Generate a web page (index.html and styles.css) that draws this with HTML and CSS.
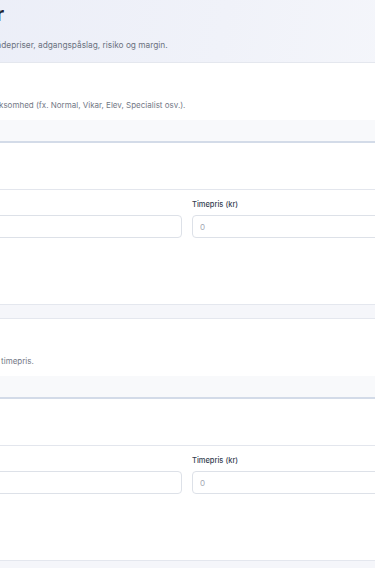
FILE: index.html
```html
<!DOCTYPE html>
<html lang="da">
<head>
    <meta charset="UTF-8">
    <meta name="viewport" content="width=device-width, initial-scale=1.0">
    <title>Prisberegninger</title>
    <link rel="stylesheet" href="styles.css">
</head>
<body>

<div class="page">
    <!-- Page header -->
    <header class="page-header">
        <h1>Prisberegninger</h1>
        <p>Administrer lønsatser, timepriser, områdepriser, adgangspåslag, risiko og margin.</p>
    </header>

    <!-- Lønsatser -->
    <section class="card">
        <div class="card-head">
            <h2>Lønsatser</h2>
            <p class="desc">Opret de lønsatser, der bruges i din virksomhed (fx. Normal, Vikar, Elev, Specialist osv.).</p>
        </div>
        <div class="list-head"><span>Navn</span></div>
        <div class="list-body"><span class="empty">Ingen lønsatser.</span></div>
        <div class="form-row">
            <div class="field">
                <label for="rateName">Navn</label>
                <input type="text" id="rateName" placeholder="fx. Normal">
            </div>
            <div class="field">
                <label for="ratePrice">Timepris (kr)</label>
                <input type="number" id="ratePrice" placeholder="0">
            </div>
        </div>
        <div class="actions">
            <button type="button">Tilføj</button>
        </div>
    </section>

    <!-- Områdepriser -->
    <section class="card">
        <div class="card-head">
            <h2>Områder</h2>
            <p class="desc">Angiv et fast tillæg oven i den normale timepris.</p>
        </div>
        <div class="list-head"><span>Område</span></div>
        <div class="list-body"><span class="empty">Ingen områder.</span></div>
        <div class="form-row">
            <div class="field">
                <label for="areaName">Område</label>
                <input type="text" id="areaName" placeholder="fx. Nord">
            </div>
            <div class="field">
                <label for="areaPrice">Timepris (kr)</label>
                <input type="number" id="areaPrice" placeholder="0">
            </div>
        </div>
        <div class="actions">
            <button type="button">Tilføj</button>
        </div>
    </section>
</div>

</body>
</html>
```

FILE: styles.css
```css
html, body {
    overflow: hidden;
}

body {
    font-family: Inter, "Noto Sans", sans-serif;
    background-color: #f5f6fa;
    margin: 0;
    padding: 0;
}

.page {
    width: 698px;
    margin-left: -162px;
}

.page-header {
    background: linear-gradient(100deg, #e9ecf7 0%, #f0f2f9 55%, #f8f9fc 100%);
    padding: 0 16px 11px 12px;
}

.page-header h1 {
    margin: 0;
    font-size: 20px;
    line-height: 28px;
    font-weight: 700;
    letter-spacing: -0.25px;
    color: #1d2231;
}

.page-header p {
    margin: 11px 0 0;
    font-size: 8.3px;
    line-height: 12px;
    color: #6b7280;
}

.card {
    background-color: #fff;
    border-top: 1px solid #e4e7ee;
    border-bottom: 1px solid #e4e7ee;
    padding: 14px 16px 28px;
}

.card + .card {
    margin-top: 13px;
}

.card-head h2 {
    margin: 0;
    font-size: 12px;
    line-height: 20px;
    font-weight: 600;
    color: #1d2231;
}

.card-head .desc {
    margin: 2px 0 9px;
    font-size: 8px;
    line-height: 12px;
    color: #737986;
}

.list-head {
    height: 21px;
    background-color: #f8f9fb;
    border-bottom: 2px solid #d3dbe8;
    font-size: 8px;
    line-height: 21px;
    font-weight: 600;
    color: #4b5563;
}

.list-body {
    height: 46px;
    border-bottom: 1px solid #e3e6ed;
    font-size: 8px;
    line-height: 46px;
}

.empty {
    color: #9ca3af;
}

.form-row {
    display: grid;
    grid-template-columns: 1fr 1fr;
    gap: 10px;
    padding-top: 9px;
}

.field label {
    display: block;
    font-size: 7.5px;
    line-height: 12px;
    font-weight: 500;
    color: #374151;
    margin-bottom: 4px;
}

.field input {
    display: block;
    width: 100%;
    height: 23px;
    box-sizing: border-box;
    border: 1px solid #dde1e8;
    border-radius: 4px;
    padding: 0 7px;
    font-family: inherit;
    font-size: 8px;
    color: #374151;
    background-color: #fff;
}

.field input::placeholder {
    color: #a3a9b3;
}

.actions {
    margin-top: 12px;
}

.actions button {
    height: 26px;
    padding: 0 14px;
    border: none;
    border-radius: 4px;
    background-color: #2563eb;
    color: #fff;
    font-family: inherit;
    font-size: 8px;
    font-weight: 600;
}
```
